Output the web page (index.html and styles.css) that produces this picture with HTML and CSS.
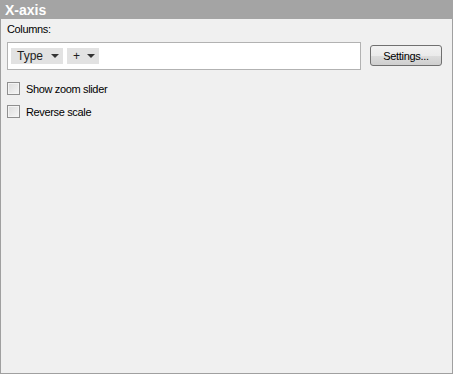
FILE: index.html
```html
<!DOCTYPE html>
<html lang="en">
  <head>
    <meta charset="UTF-8" />
    <title>X-axis</title>
    <link rel="stylesheet" href="styles.css">
  </head>
  <body>
    <main class="panel">
      <header class="panel-head">X-axis</header>
      <section class="panel-body">
        <p class="caption">Columns:</p>
        <div class="col-row">
          <div class="col-box">
            <span class="token">Type <i class="arrow"></i></span>
            <span class="token token-plus">+ <i class="arrow"></i></span>
          </div>
          <button class="btn">Settings...</button>
        </div>
        <label class="check"><span class="box"></span>Show zoom slider</label>
        <label class="check"><span class="box"></span>Reverse scale</label>
      </section>
    </main>
  </body>
</html>
```

FILE: styles.css
```css
* {
  box-sizing: border-box;
  margin: 0;
  padding: 0;
}

body {
  background-color: #f0f0f0;
  font-family: "Liberation Sans", Arial, sans-serif;
  font-size: 11px;
  color: #000;
}

.panel {
  width: 453px;
  height: 374px;
  border: 1px solid #a0a0a0;
  border-top: none;
  background-color: #f0f0f0;
}

.panel-head {
  height: 19px;
  margin: 0 -1px;
  padding: 2px 0 0 5px;
  background-color: #a4a4a4;
  color: #fff;
  font-weight: bold;
  font-size: 14px;
  line-height: 16px;
}

.panel-body {
  padding: 3px 10px 0 6px;
}

.caption {
  line-height: 14px;
  letter-spacing: -0.35px;
}

.col-row {
  display: flex;
  align-items: flex-start;
  margin-top: 6px;
}

.col-box {
  width: 354px;
  height: 28px;
  border: 1px solid #b2b2b2;
  background-color: #fff;
  display: flex;
  align-items: center;
  gap: 4px;
  padding: 0 0 0 3px;
}

.token {
  display: flex;
  align-items: center;
  height: 16px;
  padding: 0 4px 0 6px;
  background-color: #e2e2e2;
  font-size: 12px;
  color: #1e1e1e;
  width: 52px;
}

.token-plus {
  width: 32px;
}

.arrow {
  margin-left: auto;
  width: 0;
  height: 0;
  border-left: 4px solid transparent;
  border-right: 4px solid transparent;
  border-top: 4px solid #333;
}

.btn {
  margin: 3px 0 0 9px;
  width: 72px;
  height: 21px;
  border: 1px solid #707070;
  border-radius: 3px;
  background: linear-gradient(#f2f2f2 0%, #ebebeb 50%, #dddddd 51%, #cfcfcf 100%);
  font-family: "Liberation Sans", Arial, sans-serif;
  font-size: 11px;
  letter-spacing: -0.3px;
  color: #000;
}

.check {
  display: flex;
  align-items: center;
  gap: 6px;
  height: 13px;
  margin-top: 10px;
  letter-spacing: -0.35px;
  font-size: 11px;
}

.check:first-of-type {
  margin-top: 12px;
}

.box {
  width: 13px;
  height: 13px;
  border: 1px solid #8f8f8f;
  background: linear-gradient(135deg, #dcdcdc, #f6f6f6);
  box-shadow: inset 0 0 0 1px #f4f4f4;
}
```
